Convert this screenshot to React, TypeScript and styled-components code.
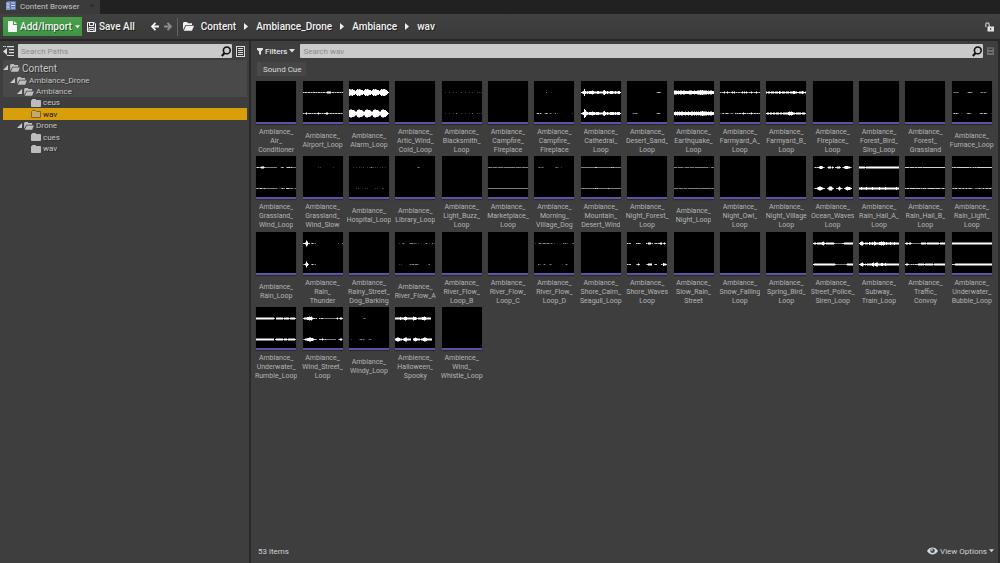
import React from "react";
import styled, { createGlobalStyle } from "styled-components";

const Global = createGlobalStyle`
  * { box-sizing: border-box; }
  body { margin: 0; background: #3e3e3e; }
  body, button, input { font-family: Roboto, "Liberation Sans", sans-serif; }
  button { border: 0; padding: 0; background: none; color: inherit; cursor: pointer; }
  svg { display: block; flex: none; }
`;

const Window = styled.div`
  display: flex;
  flex-direction: column;
  min-height: 100vh;
  background: #3e3e3e;
  color: #c8c8c8;
  font-size: 8px;
`;

const TabBar = styled.div`
  display: flex;
  height: 14px;
  background: #212121;
`;

const Tab = styled.div`
  display: flex;
  align-items: center;
  gap: 4px;
  width: 100px;
  padding: 0 6px 2px;
  background: #3b3b3b;
  color: #c4c4c4;
`;

const TabClose = styled.button`
  margin-left: auto;
  font-size: 8px;
  line-height: 8px;
  color: #242424;
`;

const Toolbar = styled.header`
  display: flex;
  align-items: center;
  height: 27px;
  padding: 0 6px 0 3px;
  border-bottom: 2px solid #262626;
  background: linear-gradient(#414141, #3a3a3a);
  color: #f2f2f2;
  font-size: 10px;
  font-weight: 500;
  text-shadow: 1px 1px 0 #1c1c1c;
`;

const AddButton = styled.button`
  display: flex;
  align-items: center;
  gap: 3px;
  width: 79px;
  height: 19px;
  padding: 0 5px;
  background: linear-gradient(#4ba04e, #3f9443);
  font-size: 10px;
  font-weight: 500;
  text-shadow: 1px 1px 0 #23572a;
`;

const ToolButton = styled.button<{ $left?: number; $color?: string }>`
  display: flex;
  align-items: center;
  gap: 3px;
  margin-left: ${(p) => p.$left ?? 0}px;
  color: ${(p) => p.$color ?? "#f2f2f2"};
  font-size: 10px;
  font-weight: 500;
  text-shadow: inherit;
`;

const ToolDivider = styled.span`
  width: 1px;
  height: 18px;
  margin: 0 5px;
  background: #636363;
`;

const Crumbs = styled.nav`
  display: flex;
  align-items: center;
  gap: 8px;
  margin-right: auto;
  padding-left: 7px;
`;

const Crumb = styled.a`
  color: #f2f2f2;
  text-decoration: none;
`;

const Body = styled.div`
  display: flex;
  flex: 1;
`;

const Paths = styled.aside`
  flex: none;
  width: 251px;
  padding: 3px 0 0 3px;
  border-right: 2px solid #292929;
`;

const SearchRow = styled.div`
  display: flex;
  align-items: center;
  gap: 4px;
  height: 14px;
`;

const SearchBox = styled.label`
  display: flex;
  flex: 1;
  align-items: center;
  height: 14px;
  padding: 0 1px 0 3px;
  border-radius: 1px;
  background: #cacaca;
`;

const SearchInput = styled.input`
  flex: 1;
  min-width: 0;
  padding: 0;
  border: 0;
  outline: 0;
  background: transparent;
  color: #222;
  font-size: 8px;
  &::placeholder { color: #8c8c8c; opacity: 1; }
`;

const Tree = styled.div`
  margin: 2px 2px 0 0;
`;

const Ancestors = styled.div`
  padding-top: 1px;
  background: #494949;
`;

const Branch = styled.div`
  > :nth-child(even) { height: 12px; }
`;

const TreeRow = styled.button<{ $depth: number; $root?: boolean; $selected?: boolean }>`
  display: flex;
  align-items: center;
  gap: 2px;
  width: 100%;
  height: ${(p) => (p.$root ? 14 : 11)}px;
  padding-left: ${(p) => p.$depth * 7}px;
  background: ${(p) => (p.$selected ? "#d99f0b" : "transparent")};
  color: ${(p) => (p.$selected ? "#1c1606" : "#c4c4c4")};
  font-size: ${(p) => (p.$root ? 10 : 8)}px;
  line-height: 11px;
  text-shadow: ${(p) => (p.$selected ? "none" : "1px 1px 0 #2c2c2c")};
`;

const Assets = styled.main`
  display: flex;
  flex: 1;
  flex-direction: column;
  min-width: 0;
  padding-top: 3px;
  border-right: 2px solid #2a2a2a;
`;

const FilterBar = styled.div`
  display: flex;
  align-items: center;
  gap: 4px;
  padding: 0 4px 0 6px;
`;

const FilterButton = styled.button`
  display: flex;
  align-items: center;
  gap: 2px;
  padding-right: 1px;
  color: #e2e2e2;
  font-size: 8px;
  font-weight: 500;
`;

const FilterChip = styled.button`
  align-self: flex-start;
  height: 14px;
  margin: 4px 0 5px 6px;
  padding: 0 4px 0 2px;
  border-left: 4px solid #4a4a4a;
  background: #464646;
  color: #dadada;
  font-size: 8px;
`;

const Grid = styled.div`
  display: grid;
  grid-template-columns: repeat(auto-fill, minmax(46px, 1fr));
  grid-auto-rows: 75px 76px;
  padding: 0 3px 0 2px;
`;

const Tile = styled.figure`
  display: flex;
  flex-direction: column;
  align-items: center;
  margin: 0;
`;

const Thumb = styled.div`
  width: 40px;
  height: 43px;
  border-bottom: 2px solid #5f52a6;
  background: #000;
  box-shadow: 0 1px 1px #2b2b2b;
`;

const Name = styled.figcaption`
  display: grid;
  align-content: safe center;
  height: 26px;
  margin-top: 4px;
  overflow: hidden;
  color: #b4b4b4;
  font-size: 7px;
  line-height: 9px;
  text-align: center;
  white-space: pre;
`;

const StatusBar = styled.footer`
  display: flex;
  align-items: center;
  justify-content: space-between;
  height: 14px;
  margin-top: auto;
  margin-bottom: 5px;
  padding: 0 4px 0 7px;
  color: #d2d2d2;
`;

const ViewOptions = styled.button`
  display: flex;
  align-items: center;
  gap: 2px;
  font-size: 8px;
`;

const Caret = ({ size = 6 }: { size?: number }) => (
  <svg width={size} height="4" viewBox="0 0 6 4"><path d="M0 0h6L3 3.4z" fill="currentColor" /></svg>
);

const CrumbArrow = () => (
  <svg width="4" height="7" viewBox="0 0 4 7"><path d="M0 0l4 3.5L0 7z" fill="#f2f2f2" /></svg>
);

const TabIcon = () => (
  <svg width="10" height="10" viewBox="0 0 10 10">
    <rect x="1" y="0" width="9" height="9" rx="1" fill="#5b74ae" />
    <rect x="0" y="1" width="4" height="8" fill="#8298c8" />
    <path d="M5 2h4M5 4.5h4M5 7h4M1 3h2M1 6h2" stroke="#dce4f6" />
  </svg>
);

const PageIcon = () => (
  <svg width="9" height="11" viewBox="0 0 9 11">
    <path d="M0 0h5v4h4v7H0z" fill="#f4f8f4" /><path d="M6 0l3 3H6z" fill="#f4f8f4" />
  </svg>
);

const DiskIcon = () => (
  <svg width="9" height="10" viewBox="0 0 9 10" fill="none" stroke="currentColor">
    <path d="M.5.5h6.7L8.5 2v7.5h-8z" /><path d="M2.5.5v3h4v-3M2 9.5v-4h5v4M3 7.5h3" />
  </svg>
);

const SmallDiskIcon = () => (
  <svg width="7" height="8" viewBox="0 0 7 8">
    <path d="M0 0h6l1 1v7H0z" fill="currentColor" /><path d="M2 0v2.500h3V0M1.500 5.500h4" fill="none" stroke="#3a3a3a" />
  </svg>
);

const ArrowIcon = ({ flip = false }: { flip?: boolean }) => (
  <svg width="8" height="9" viewBox="0 0 8 9" fill="none" stroke="currentColor" strokeWidth="1.8">
    <path d={flip ? "M0 4.5h7M3.5.8l3.5 3.7-3.5 3.7" : "M8 4.5H1M4.5.8L1 4.5l3.5 3.7"} />
  </svg>
);

const OpenFolder = ({ light = false }: { light?: boolean }) => (
  <svg width={light ? 11 : 10} height={light ? 9 : 8} viewBox="0 0 11 9" fill={light ? "#f2f2f2" : "#bdbdbd"}>
    <path d="M0 8V1l1-1h3l1 1.2h4V3H2.5z" /><path d="M3 3.8h8L9 8.8H.8z" />
  </svg>
);

const ClosedFolder = ({ outlined = false }: { outlined?: boolean }) => (
  <svg width="10" height="8" viewBox="0 0 10 8">
    <path
      d="M.5 7.5v-6l1-1h3l1 1h4v6z"
      fill={outlined ? "#c2ab6c" : "#bdbdbd"}
      stroke={outlined ? "#7e6524" : "#bdbdbd"}
    />
  </svg>
);

const Expander = () => (
  <svg width="5" height="6" viewBox="0 0 5 6"><path d="M5 0v5H0z" fill="#c8c8c8" /></svg>
);

const SearchIcon = () => (
  <svg width="10" height="11" viewBox="0 0 10 11" fill="none" stroke="#111">
    <circle cx="5.8" cy="4.4" r="3.4" strokeWidth="1.6" /><path d="M3.6 7L.8 10" strokeWidth="2" />
  </svg>
);

const SourcesIcon = () => (
  <svg width="11" height="10" viewBox="0 0 11 10" fill="#dadada">
    <path d="M4 0h7v1.2H4zM6 3h5v1.2H6zM6 6h5v1.2H6zM4 9h7v1H4zM0 5.5L4 2v7zM0 0h1.5v1H0zM2 0h1v1H2z" />
  </svg>
);

const ListIcon = () => (
  <svg width="9" height="11" viewBox="0 0 9 11">
    <rect x=".5" y=".5" width="8" height="10" fill="#333" stroke="#dedede" />
    <path d="M2 2.5h5M2 4.5h5M2 6.5h5M2 8.5h5" stroke="#dedede" />
  </svg>
);

const FunnelIcon = () => (
  <svg width="6" height="7" viewBox="0 0 6 7"><path d="M0 0h6v1.5L4 3.5V7L2 6V3.5L0 1.5z" fill="#e2e2e2" /></svg>
);

const LockIcon = () => (
  <svg width="9" height="10" viewBox="0 0 9 10">
    <path d="M.8 5V2.5A1.7 1.7 0 0 1 4.2 2.5V5" fill="none" stroke="#c4c4c4" strokeWidth="1.2" />
    <path d="M2.5 4.5H9V9.5H2.5z" fill="#e4e4e4" /><path d="M5.7 6v2" stroke="#444" />
  </svg>
);

const EyeIcon = () => (
  <svg width="11" height="8" viewBox="0 0 12 8">
    <path d="M0 4Q2.5.3 6 .3T12 4Q9.5 7.7 6 7.7T0 4z" fill="#d8dcde" />
    <circle cx="6" cy="3.8" r="2.5" fill="#3c4a54" /><circle cx="5.4" cy="3" r=".9" fill="#e8eef0" />
  </svg>
);

// Each character is one pixel column: blank is silence, punctuation a quiet
// one-pixel trace, a digit the height of a loud column.
const QUIET: Record<string, string> = { ".": "#3a3a3a", "-": "#7d7d7d", "=": "#cfcfcf" };

const Channel = ({ data, y }: { data: string; y: number }) => (
  <>
    {[...data].map((c, i) => {
      if (c === " ") return null;
      const h = QUIET[c] ? 1 : Number(c);
      return <rect key={i} x={i} y={y - h / 2} width="1" height={h} fill={QUIET[c] ?? "#fff"} />;
    })}
  </>
);

const Wave = ({ channels }: { channels: [string, string] }) => (
  <svg width="40" height="41" viewBox="0 0 40 41">
    <Channel data={channels[0]} y={11.5} />
    <Channel data={channels[1]} y={32.5} />
  </svg>
);

type Asset = { name: string; wave?: [string, string] };

const a = (rest: string, top?: string, bottom?: string): Asset => ({
  name: "Ambiance_\n" + rest,
  wave: top === undefined ? undefined : [top, bottom ?? top],
});

const assets: Asset[] = [
  a("Air_\nConditioner"),
  a("Airport_Loop", "=-==-==-=-==-=-==-=-==-=2222-==-=-==-=-=", "=-=2-===-=-==-=2==-=-==22=-==-=-==-==-=-"),
  a("Alarm_Loop", "7667553576765535767655357676553576776531", "7887764478877644788776447887764478877531"),
  a("Artic_Wind_\nCold_Loop"),
  a("Blacksmith_\nLoop", "   .   .   .  .    .   .   .  .    . . .", "   .   .   .  -    .   .   .  -    . . ."),
  a("Campfire_\nFireplace"),
  a("Campfire_\nFireplace", "            -                           ", "  .==.=.  .-=- .-.  .- .              . "),
  a("Cathedral_\nLoop", "1237323233343222332222453232233322322331", "1239743233343323332222453232233332323331"),
  a("Desert_Sand_\nLoop", "                             .-==-      ", "     .-.--.                  .-=-.      "),
  a("Earthquake_\nLoop", "4443434434433334443343344454544443434433", "3434343443343343344343434344544443434433"),
  a("Farmyard_A_\nLoop", "=-==2-=2==-=2=2-=-==-=2=2=2=-==2=-==2=-=", "..-=.-==-..--. =-=-==-=2==-=-==2=-==-=-="),
  a("Farmyard_B_\nLoop", "2122122212221321222122212223322112223212", "122122122122212212222234343221222221222="),
  a("Fireplace_\nLoop"),
  a("Forest_Bird_\nSing_Loop"),
  a("Forest_\nGrassland"),
  a("Furnace_Loop", " .-.--.        .-=--.       .--.--.     ", " -=-=-.  .    .-=--.       .-=-.==-.   ."),

  a("Grassland_\nWind_Loop", "-==-=222=------------   .-=-  -===-=----", "-=--==--=------------. ..-=-- ===----..-"),
  a("Grassland_\nWind_Slow", "               . .            .         ", ""),
  a("Hospital_Loop", "    .  .  . . .   . ..-.. . .  . .  .   ", "       . .      . .       . .    ..     "),
  a("Library_Loop", "                      .-.               ", ""),
  a("Light_Buzz_\nLoop"),
  a("Marketplace_\nLoop", "----.----.-----.-----------.-----.------", "----------------------------------------"),
  a("Morning_\nVillage_Dog", "    .-..-.           .-..  .            ", ""),
  a("Mountain_\nDesert_Wind", "--------------==--------------=-=-------", "--------------=-=----------=------------"),
  a("Night_Forest_\nLoop"),
  a("Night_Loop", "---.-----..----.----.-------------.. ---", "----.----.---.-----------.----------.---"),
  a("Night_Owl_\nLoop"),
  a("Night_Village\nLoop"),
  a("Ocean_Waves\nLoop", " -=-==2332=-  -222-2= ==222= -=233322=- ", " -==2344321=  =24442=  ==242=- =2343321 "),
  a("Rain_Hail_A_\nLoop", "2222221222222222222222222222222222222222", "2232222322222322222232222232222222222322"),
  a("Rain_Hail_B_\nLoop", "====-====-==-====-======================", "=-==-=====-====-=-===--=======-====--==-"),
  a("Rain_Light_\nLoop", "=-==-============-=--=-=-===============", "-=-==--==--=--=--==-...----=---=--==-==-"),

  a("Rain_Loop"),
  a("Rain_\nThunder", "=1264== -=-.-                      .   -", "-=263=  -=-.-                           "),
  a("Rainy_Street_\nDog_Barking"),
  a("River_Flow_A", "    .  .-.    .---.-.. .      .-. .  - .", "    . .       .-.--.---.         .-     "),
  a("River_Flow_\nLoop_B"),
  a("River_Flow_\nLoop_C"),
  a("River_Flow_\nLoop_D", " .  .--..---.--..-. .        -.-..    .-", "    -..  .-.   .-.          .  .-.      "),
  a("Shore_Calm_\nSeagull_Loop"),
  a("Shore_Waves\nLoop", "=-==     =-==-     =-222-= -==-==22-=2= ", "=-==     -=2=      -=2222  -==    =-322="),
  a("Slow_Rain_\nStreet"),
  a("Snow_Falling\nLoop"),
  a("Spring_Bird_\nLoop"),
  a("Street_Police_\nSiren_Loop", "122122222342122222222=-------==222222222", "1222222222222222222222=----------=222222"),
  a("Subway_\nTrain_Loop", "1344212221322324322233434323222322232222", "1234212122222342344222332232222222222222"),
  a("Traffic_\nConvoy", "122122=---------22222=222222222222=22222", "122=--=-=-===222222122222222=22222222222"),
  a("Underwater_\nBubble_Loop", "2222222222222222222222222222222222222222", "===2222222222222222222222222222222222222"),

  a("Underwater_\nRumble_Loop", "222222222222222222= 2222222=22222=22222=", "222222222222222222 =2222222=222=2222222="),
  a("Wind_Street_\nLoop", "=222334342==-=  =-==-------------=2-=22=", "-=223344332==-  ===2=-=----------  -=22-"),
  a("Windy_Loop", "              .-.               ", "  .       .--.-.   ..-.          "),
  { name: "Ambience_\nHalloween_\nSpooky", wave: ["2222232223432222224332=2222334322222    ", "2344322123442222  2343222=22344322222   "] },
  { name: "Ambience_\nWind_\nWhistle_Loop" },
];

const crumbs = ["Content", "Ambiance_Drone", "Ambiance", "wav"];

type NodeProps = { label: string; depth: number; open?: boolean; root?: boolean; selected?: boolean };

const TreeNode = ({ label, depth, open, root, selected }: NodeProps) => (
  <TreeRow $depth={depth} $root={root} $selected={selected}>
    {open && <Expander />}
    {open ? <OpenFolder /> : <ClosedFolder outlined={selected} />}
    {label}
  </TreeRow>
);

export default function App() {
  return (
    <Window>
      <Global />
      <TabBar>
        <Tab><TabIcon />Content Browser<TabClose aria-label="Close tab">×</TabClose></Tab>
      </TabBar>
      <Toolbar>
        <AddButton><PageIcon />Add/Import<Caret size={5} /></AddButton>
        <ToolButton $left={5}><DiskIcon />Save All</ToolButton>
        <ToolButton $left={16} aria-label="Back"><ArrowIcon /></ToolButton>
        <ToolButton $left={5} $color="#8e8e8e" aria-label="Forward"><ArrowIcon flip /></ToolButton>
        <ToolDivider />
        <ToolButton aria-label="Choose a path"><OpenFolder light /></ToolButton>
        <Crumbs aria-label="Path">
          {crumbs.map((c, i) => (
            <React.Fragment key={c}>
              {i > 0 && <CrumbArrow />}
              <Crumb href="#">{c}</Crumb>
            </React.Fragment>
          ))}
        </Crumbs>
        <ToolButton aria-label="Lock"><LockIcon /></ToolButton>
      </Toolbar>
      <Body>
        <Paths>
          <SearchRow>
            <ToolButton aria-label="Hide sources"><SourcesIcon /></ToolButton>
            <SearchBox>
              <SearchInput type="text" placeholder="Search Paths" aria-label="Search Paths" />
              <SearchIcon />
            </SearchBox>
            <ToolButton aria-label="Collections"><ListIcon /></ToolButton>
            <span />
          </SearchRow>
          <Tree>
            <Ancestors>
              <TreeNode label="Content" depth={0} open root />
              <TreeNode label="Ambiance_Drone" depth={1} open />
              <TreeNode label="Ambiance" depth={2} open />
            </Ancestors>
            <Branch>
              <TreeNode label="ceus" depth={4} />
              <TreeNode label="wav" depth={4} selected />
              <TreeNode label="Drone" depth={2} open />
              <TreeNode label="cues" depth={4} />
              <TreeNode label="wav" depth={4} />
            </Branch>
          </Tree>
        </Paths>
        <Assets>
          <FilterBar>
            <FilterButton><FunnelIcon />Filters<Caret /></FilterButton>
            <SearchBox>
              <SearchInput type="text" placeholder="Search wav" aria-label="Search wav" />
              <SearchIcon />
            </SearchBox>
            <ToolButton $color="#6e6e6e" aria-label="Save search"><SmallDiskIcon /></ToolButton>
          </FilterBar>
          <FilterChip>Sound Cue</FilterChip>
          <Grid>
            {assets.map((asset, i) => (
              <Tile key={i}>
                <Thumb>{asset.wave && <Wave channels={asset.wave} />}</Thumb>
                <Name>{asset.name}</Name>
              </Tile>
            ))}
          </Grid>
          <StatusBar>
            <span>53 items</span>
            <ViewOptions><EyeIcon />View Options<Caret size={5} /></ViewOptions>
          </StatusBar>
        </Assets>
      </Body>
    </Window>
  );
}
